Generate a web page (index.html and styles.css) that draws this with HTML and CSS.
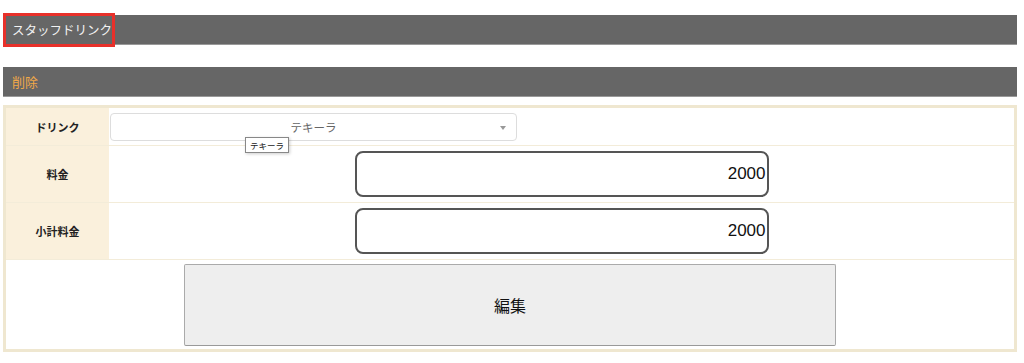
FILE: index.html
```html
<!DOCTYPE html>
<html lang="ja">
<head>
<meta charset="UTF-8">
<title>スタッフドリンク</title>
<link rel="stylesheet" href="styles.css">
</head>
<body>
<div class="page">
  <div class="bar">
    <span class="bar-title marked">スタッフドリンク</span>
  </div>

  <div class="bar sub">
    <span class="bar-title delete">削除</span>
  </div>

  <table class="form-table">
    <tr class="row-drink">
      <th>ドリンク</th>
      <td class="select-cell">
        <div class="select-box">
          <span class="select-text">テキーラ</span>
          <span class="select-arrow"></span>
          <span class="tooltip">テキーラ</span>
        </div>
      </td>
    </tr>
    <tr class="row-price">
      <th>料金</th>
      <td class="input-cell"><input class="num-input" type="text" value="2000"></td>
    </tr>
    <tr class="row-price">
      <th>小計料金</th>
      <td class="input-cell"><input class="num-input" type="text" value="2000"></td>
    </tr>
    <tr class="row-btn">
      <td colspan="2"><button class="edit-btn">編集</button></td>
    </tr>
  </table>
</div>
</body>
</html>
```

FILE: styles.css
```css
body {
  margin: 0;
  font-family: "Noto Sans CJK JP", "Liberation Sans", sans-serif;
  background-color: #fff;
}

.page {
  width: 1014px;
  margin-left: 3px;
  padding-top: 15px;
}

.bar {
  display: flex;
  align-items: center;
  height: 30px;
  background-color: #666;
  border-bottom: 1px solid #999;
  box-sizing: border-box;
}

.bar.sub {
  margin-top: 22px;
}

.bar-title {
  font-size: 13px;
  color: #fff;
  padding-left: 9px;
  white-space: nowrap;
}

.bar-title.marked {
  box-sizing: border-box;
  height: 34px;
  width: 112px;
  margin: -2px 0;
  padding-left: 6px;
  display: flex;
  align-items: center;
  font-size: 12.5px;
  color: #f2f2f2;
  border: 3px solid #e8302a;
}

.bar-title.delete {
  color: #f0a848;
}

.form-table {
  width: 1014px;
  margin-top: 8px;
  border-collapse: collapse;
  border: 3px solid #efe7d0;
}

.form-table th,
.form-table td {
  border-top: 1px solid #f3ecd9;
  padding: 0;
}

.form-table th {
  width: 103px;
  background-color: #faf0dc;
  font-size: 11px;
  font-weight: bold;
  color: #222;
}

.row-drink {
  height: 39px;
}

.row-price {
  height: 57px;
}

.row-btn {
  height: 91px;
  text-align: center;
}

.select-cell {
  vertical-align: top;
}

.select-box {
  position: relative;
  box-sizing: border-box;
  width: 407px;
  height: 28px;
  margin: 5px 0 0 1px;
  border: 1px solid #ddd;
  border-radius: 4px;
  display: flex;
  align-items: center;
  justify-content: center;
}

.select-text {
  font-size: 11.5px;
  color: #666;
}

.select-arrow {
  position: absolute;
  right: 10px;
  top: 12px;
  border-left: 3px solid transparent;
  border-right: 3px solid transparent;
  border-top: 4px solid #999;
}

.tooltip {
  position: absolute;
  left: 134px;
  top: 23px;
  padding: 1px 4px;
  font-size: 8.5px;
  color: #222;
  background-color: #fff;
  border: 1px solid #888;
  box-shadow: 1px 1px 3px rgba(0, 0, 0, 0.2);
}

.input-cell {
  text-align: center;
}

.num-input {
  box-sizing: border-box;
  width: 414px;
  height: 46px;
  border: 2px solid #555;
  border-radius: 8px;
  padding: 0 1px;
  font-family: "Liberation Sans", sans-serif;
  font-size: 17px;
  text-align: right;
  color: #111;
  background: #fff;
  vertical-align: middle;
}

.edit-btn {
  width: 652px;
  height: 82px;
  background-color: #eee;
  border: 1px solid #aaa;
  border-bottom-color: #999;
  border-radius: 2px;
  font-family: "Noto Sans CJK JP", sans-serif;
  font-size: 16px;
  color: #111;
  vertical-align: middle;
}
```
